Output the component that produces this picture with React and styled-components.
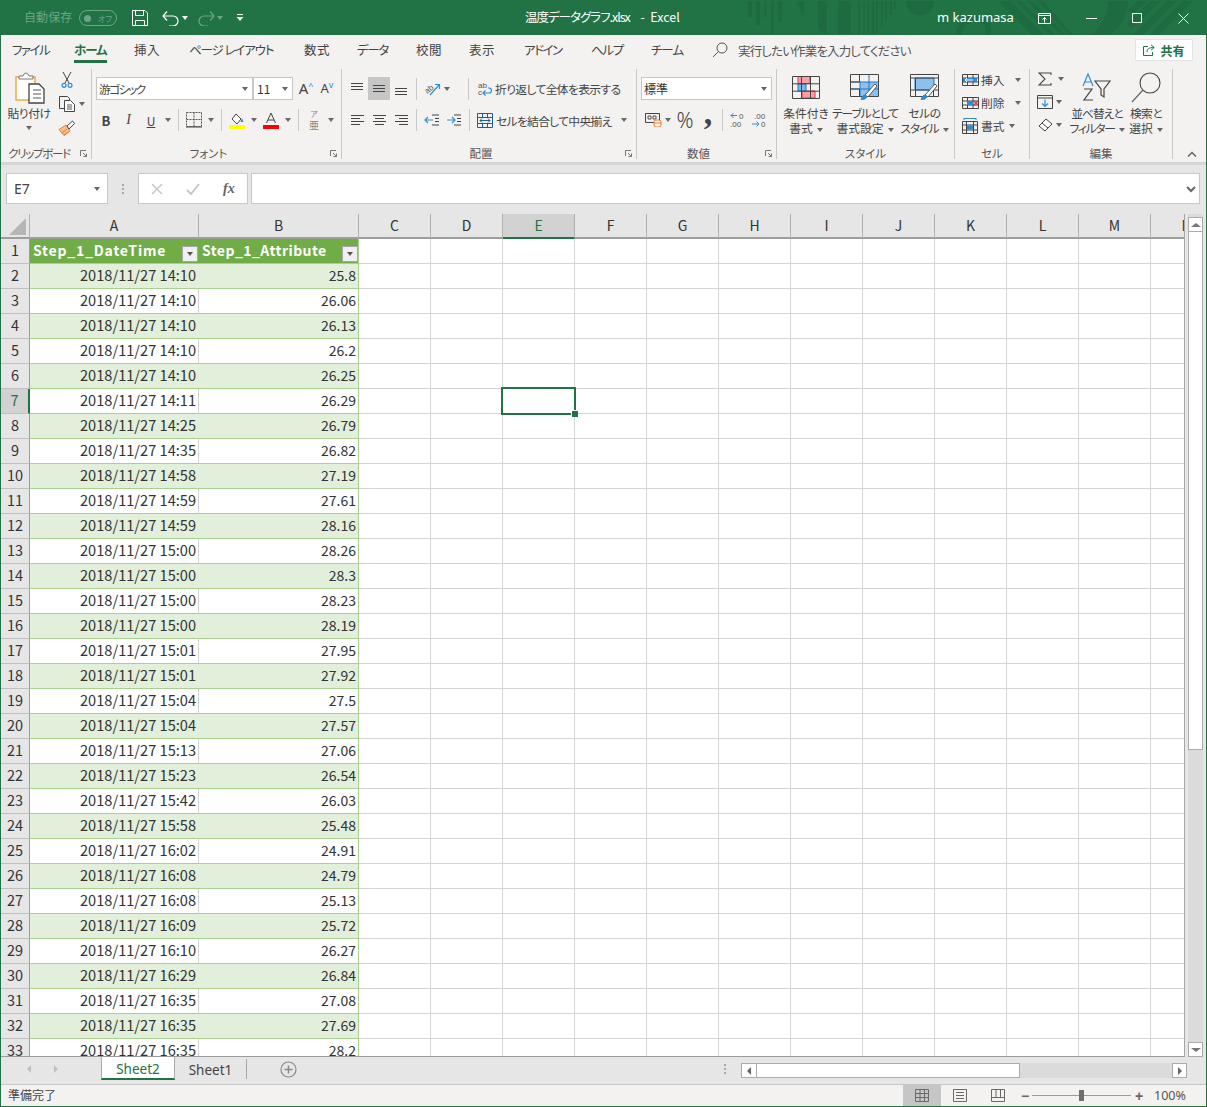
import styled, { createGlobalStyle } from 'styled-components'

const GREEN = '#217346'
const UI = '"Noto Sans CJK JP", "Noto Sans", sans-serif'

const GlobalStyle = createGlobalStyle`
    html, body { margin: 0; padding: 0; background: #fff; }
    * { box-sizing: border-box; }
    body {
        font-family: ${UI};
        font-feature-settings: "palt";
        color: #444;
    }
`

const Window = styled.div`
    width: 1207px;
    height: 1107px;
    border: 1px solid ${GREEN};
    display: flex;
    flex-direction: column;
    overflow: hidden;
    background: #e6e6e6;
`

/* title bar */
const TitleBar = styled.div`
    position: relative;
    height: 34px;
    flex: none;
    background: ${GREEN};
    display: flex;
    align-items: center;
    color: #fff;
    font-size: 12px;
    padding-left: 23px;
`
const Pattern = styled.svg`
    position: absolute;
    left: 0;
    top: 0;
`
const QuickAccess = styled.div`
    position: relative;
    width: 501px;
    display: flex;
    align-items: center;
    flex: none;
`
const AutoSave = styled.span`
    font-size: 12px;
    color: #6fa387;
    letter-spacing: 0.1px;
    width: 55px;
    margin-top: -3px;
`
const Toggle = styled.div`
    width: 38px;
    height: 16px;
    border: 1px solid #6fa387;
    border-radius: 8px;
    display: flex;
    align-items: center;
    padding-left: 4px;
    color: #6fa387;
    font-size: 8px;
    gap: 7px;
    margin-right: 15px;
    &::before {
        content: '';
        width: 7px;
        height: 7px;
        border-radius: 50%;
        background: #6fa387;
    }
`
const QuickIcon = styled.svg`
    flex: none;
    margin-left: ${(p) => p.$ml || 0}px;
`
const WindowTitle = styled.div`
    position: relative;
    width: 412px;
    flex: none;
    font-size: 12.5px;
    white-space: pre;
    margin-top: -3px;
`
const TitleName = styled.span`
    letter-spacing: -1px;
`
const TitleApp = styled.span`
    margin-left: 5px;
`
const UserName = styled.div`
    position: relative;
    width: 101px;
    flex: none;
    font-family: 'Noto Sans', sans-serif;
    font-size: 13px;
    margin-top: -2px;
`
const CaptionIcon = styled.svg`
    position: relative;
    flex: none;
    margin-left: ${(p) => p.$ml || 0}px;
`

/* ribbon tabs */
const TabRow = styled.div`
    height: 33px;
    flex: none;
    display: flex;
    background: #f3f2f1;
    padding-left: 11px;
`
const RibbonTab = styled.div`
    width: ${(p) => p.$w}px;
    flex: none;
    padding-top: 7px;
    display: flex;
    align-items: flex-start;
`
const TabLabel = styled.span`
    display: block;
    height: 21px;
    line-height: 16px;
    font-size: 12.5px;
    white-space: pre;
    letter-spacing: ${(p) => p.$ls}px;
    color: ${(p) => (p.$active ? GREEN : '#444')};
    font-weight: ${(p) => (p.$active ? 700 : 400)};
    border-bottom: ${(p) => (p.$active ? `3px solid ${GREEN}` : 'none')};
`
const TellMe = styled.div`
    display: flex;
    align-items: center;
    font-size: 12.5px;
    color: #555;
    height: 30px;
    letter-spacing: -0.85px;
    & > svg {
        margin-right: 10px;
    }
`
const ShareButton = styled.div`
    margin-left: auto;
    margin-right: 13px;
    margin-top: 4px;
    width: 58px;
    height: 22px;
    background: #fff;
    border: 1px solid #e3e3e3;
    display: flex;
    align-items: center;
    justify-content: center;
    gap: 5px;
    color: ${GREEN};
    font-weight: 700;
    font-size: 12px;
`

/* ribbon body */
const Ribbon = styled.div`
    height: 94px;
    flex: none;
    display: flex;
    background: #f3f2f1;
    padding-top: 1px;
    border-bottom: 0;
    position: relative;
`
const RibbonShadow = styled.div`
    height: 3px;
    flex: none;
    background: #d6d6d6;
`
const Group = styled.div`
    width: ${(p) => p.$w}px;
    height: 90px;
    flex: none;
    border-right: 1px solid #c8c8c8;
    display: flex;
    flex-direction: column;
`
const GroupBody = styled.div`
    height: 76px;
    flex: none;
    display: flex;
    flex-direction: ${(p) => p.$dir || 'row'};
`
const GroupFoot = styled.div`
    position: relative;
    height: 16px;
    line-height: 16px;
    text-align: ${(p) => (p.$left ? 'left' : 'center')};
    padding-left: ${(p) => (p.$left ? 7 : 0)}px;
    padding-right: ${(p) => p.$pr || 0}px;
    letter-spacing: ${(p) => p.$ls || 0}px;
    font-size: 11.5px;
    color: #555;
    white-space: nowrap;
`
const Launcher = styled.svg`
    position: absolute;
    right: 4px;
    top: 5px;
`
const Collapse = styled.svg`
    position: absolute;
    right: 9px;
    bottom: 5px;
`
const ToolRow = styled.div`
    display: flex;
    align-items: center;
    height: ${(p) => p.$h || 24}px;
    margin-top: ${(p) => p.$mt || 0}px;
    padding-left: ${(p) => p.$pl || 0}px;
`
const Tool = styled.div`
    width: ${(p) => p.$w}px;
    height: 23px;
    flex: none;
    display: flex;
    align-items: center;
    justify-content: center;
    font-family: ${(p) => (p.$serif ? '"Liberation Serif", serif' : 'inherit')};
    font-size: ${(p) => p.$fs || 13}px;
    font-weight: ${(p) => (p.$bold ? 700 : 400)};
    font-style: ${(p) => (p.$italic ? 'italic' : 'normal')};
    background: ${(p) => (p.$on ? '#c6c6c6' : 'transparent')};
    color: #444;
`
const GrowFont = styled.span`
    font-family: 'Noto Sans', sans-serif;
    line-height: 1;
    & > sup {
        font-size: 9px;
        color: #2a8dd4;
        vertical-align: 5px;
        line-height: 0;
    }
`
const Ruby = styled.span`
    display: flex;
    flex-direction: column;
    align-items: center;
    gap: 2px;
    color: #888;
    font-size: 10px;
    line-height: 10px;
    & > small {
        font-size: 8px;
        line-height: 8px;
    }
`
const PercentTool = styled(Tool)`
    font-family: 'Noto Sans', sans-serif;
    font-size: 21px;
    font-weight: 300;
`
const CommaTool = styled(Tool)`
    font-family: 'Liberation Serif', serif;
    font-size: 34px;
    font-weight: 700;
    line-height: 23px;
    padding: 0 0 16px 2px;
`
const Caret = styled.span`
    display: inline-block;
    flex: none;
    width: 0;
    height: 0;
    border-left: 3.5px solid transparent;
    border-right: 3.5px solid transparent;
    border-top: 4px solid ${(p) => p.$c || '#666'};
    margin-left: ${(p) => p.$ml || 0}px;
    margin-top: ${(p) => p.$mt || 0}px;
    vertical-align: middle;
`
const Divider = styled.div`
    width: ${(p) => p.$w || 10}px;
    margin-left: ${(p) => p.$ml || 0}px;
    height: 22px;
    flex: none;
    display: flex;
    justify-content: center;
    &::before {
        content: '';
        width: 1px;
        background: #c8c8c8;
    }
`
const ComboBox = styled.div`
    width: ${(p) => p.$w}px;
    height: 23px;
    flex: none;
    background: #fff;
    border: 1px solid #c6c6c6;
    display: flex;
    align-items: center;
    justify-content: space-between;
    padding: 0 4px 0 2px;
    font-size: 12px;
    letter-spacing: ${(p) => p.$ls || 0}px;
    color: #333;
`
const ToolText = styled.span`
    font-size: 11.8px;
    white-space: nowrap;
    color: #444;
    letter-spacing: ${(p) => p.$ls || 0}px;
    margin-left: ${(p) => p.$ml || 0}px;
`
const PasteColumn = styled.div`
    width: 56px;
    flex: none;
    display: flex;
    flex-direction: column;
    align-items: center;
    padding-top: 3px;
    font-size: 11.8px;
    line-height: 15px;
    letter-spacing: -0.5px;
`
const PasteIcon = styled.svg`
    margin-left: 4px;
    margin-bottom: 1px;
`
const ToolStack = styled.div`
    display: flex;
    flex-direction: column;
    margin-top: ${(p) => p.$mt || -1}px;
    width: ${(p) => p.$w || 'auto'};
`
const BigButton = styled.div`
    width: ${(p) => p.$w}px;
    flex: none;
    display: flex;
    flex-direction: column;
    align-items: center;
    font-size: 11.8px;
    line-height: 15px;
    white-space: nowrap;
    color: #444;
`
const BigLine = styled.span`
    letter-spacing: ${(p) => p.$ls || 0}px;
`
const BigIcon = styled.div`
    height: 36px;
    display: flex;
    align-items: center;
    justify-content: center;
`

/* formula bar */
const FormulaBar = styled.div`
    height: 49px;
    flex: none;
    display: flex;
    padding: 8px 6px 10px 5px;
    background: #e6e6e6;
`
const NameBox = styled.div`
    width: 102px;
    height: 31px;
    background: #fff;
    border: 1px solid #c8c8c8;
    display: flex;
    align-items: center;
    justify-content: space-between;
    padding: 0 7px 0 7px;
    font-family: 'Noto Sans', sans-serif;
    font-size: 14px;
    color: #444;
`
const Grip = styled.div`
    width: 30px;
    display: flex;
    flex-direction: column;
    align-items: center;
    justify-content: center;
    gap: 2px;
    & > i {
        width: 2px;
        height: 2px;
        background: #a8a8a8;
    }
`
const FormulaButtons = styled.div`
    width: 110px;
    height: 31px;
    background: #fff;
    border: 1px solid #c8c8c8;
    display: flex;
    align-items: center;
`
const FormulaButton = styled.div`
    width: 36px;
    display: flex;
    justify-content: center;
    font-family: 'Liberation Serif', serif;
    font-style: italic;
    font-weight: 700;
    font-size: 14px;
    color: #666;
`
const FormulaInput = styled.div`
    width: 950px;
    height: 31px;
    margin-left: 3px;
    background: #fff;
    border: 1px solid #c8c8c8;
    display: flex;
    align-items: center;
    justify-content: flex-end;
    padding-right: 3px;
`

/* sheet */
const Sheet = styled.div`
    height: 843px;
    flex: none;
    display: flex;
`
const GridViewport = styled.div`
    width: 1184px;
    height: 843px;
    flex: none;
    overflow: hidden;
    background: #fff;
    border-right: 1px solid #a6a6a6;
    border-bottom: 1px solid #9a9a9a;
    position: relative;
`
const Grid = styled.div`
    display: grid;
    grid-template-columns: 29px 169px 160px repeat(12, 72px);
    grid-auto-rows: 25px;
    width: 1300px;
    font-family: 'Noto Sans CJK JP', sans-serif;
    font-feature-settings: normal;
`
const Corner = styled.div`
    background: #e6e6e6;
    border-right: 1px solid #b0b0b0;
    border-bottom: 2px solid #9e9e9e;
    position: relative;
    &::after {
        content: '';
        position: absolute;
        left: 8px;
        top: 4px;
        width: 17px;
        height: 17px;
        background: #b6b6b6;
        clip-path: polygon(100% 0, 100% 100%, 0 100%);
    }
`
const ColHead = styled.div`
    background: ${(p) => (p.$active ? '#d2d2d2' : '#e6e6e6')};
    border-right: 1px solid #b0b0b0;
    border-bottom: 2px solid ${(p) => (p.$active ? GREEN : '#9e9e9e')};
    display: flex;
    align-items: center;
    justify-content: center;
    padding-bottom: 2px;
    font-size: 14px;
    color: ${(p) => (p.$active ? GREEN : '#333')};
`
const RowHead = styled.div`
    background: ${(p) => (p.$active ? '#d2d2d2' : '#e6e6e6')};
    border-right: ${(p) => (p.$active ? `2px solid ${GREEN}` : '1px solid #9e9e9e')};
    border-bottom: 1px solid #c0c0c0;
    display: flex;
    align-items: center;
    justify-content: center;
    padding-bottom: 3px;
    font-size: 14.5px;
    color: ${(p) => (p.$active ? GREEN : '#333')};
`
const TableHead = styled.div`
    background: #70ad47;
    color: #fff;
    font-weight: 700;
    font-size: 14px;
    letter-spacing: ${(p) => (p.$last ? 0.45 : 0.8)}px;
    border-bottom: 1px solid #a9d08e;
    border-right: ${(p) => (p.$last ? '1px solid #a9d08e' : 'none')};
    display: flex;
    align-items: center;
    justify-content: space-between;
    padding: 0 ${(p) => (p.$last ? 0 : 1)}px 2px 3px;
`
const FilterButton = styled.div`
    width: 16px;
    height: 16px;
    flex: none;
    background: #f0f0f0;
    border: 1px solid #a6a6a6;
    margin-top: 8px;
    display: flex;
    align-items: center;
    justify-content: center;
`
const DataCell = styled.div`
    background: ${(p) => (p.$band ? '#e2efda' : '#fff')};
    border-bottom: 1px solid #a9d08e;
    border-right: ${(p) =>
        p.$last ? '1px solid #a9d08e' : p.$band ? 'none' : '1px solid #d4d4d4'};
    text-align: right;
    padding-right: ${(p) => (p.$last ? 2 : p.$band ? 3 : 2)}px;
    font-size: ${(p) => (p.$last ? 14 : 14.6)}px;
    line-height: 22px;
    color: #333;
`
const EmptyCell = styled.div`
    position: relative;
    border-right: 1px solid #d4d4d4;
    border-bottom: 1px solid #d4d4d4;
`
const Selection = styled.div`
    position: absolute;
    inset: -2px;
    border: 2px solid ${GREEN};
    z-index: 2;
    &::after {
        content: '';
        position: absolute;
        right: -4px;
        bottom: -4px;
        width: 6px;
        height: 6px;
        background: ${GREEN};
        border-left: 1px solid #fff;
        border-top: 1px solid #fff;
    }
`
const VScroll = styled.div`
    width: 15px;
    height: 843px;
    margin-left: 3px;
    padding-top: 3px;
    flex: none;
    display: flex;
    flex-direction: column;
    background: #dbdbdb;
`
const ScrollButton = styled.div`
    width: ${(p) => p.$w || 15}px;
    height: ${(p) => p.$h || 15}px;
    flex: none;
    background: #fff;
    border: 1px solid #ababab;
    display: flex;
    align-items: center;
    justify-content: center;
    margin-left: ${(p) => p.$ml || 0}px;
`
const VThumb = styled.div`
    height: 518px;
    flex: none;
    background: #fff;
    border: 1px solid #ababab;
    border-top: 0;
`
const TrackFill = styled.div`
    flex: 1;
`

/* sheet tabs */
const SheetTabs = styled.div`
    height: 28px;
    flex: none;
    display: flex;
    background: #e6e6e6;
    border-bottom: 1px solid #c6c6c6;
`
const SheetNav = styled.div`
    width: 100px;
    flex: none;
    display: flex;
    align-items: center;
    padding: 0 0 4px 26px;
    gap: 23px;
`
const SheetTab = styled.div`
    width: ${(p) => p.$w}px;
    height: 24px;
    flex: none;
    margin-top: -1px;
    padding-top: 3px;
    display: flex;
    align-items: center;
    justify-content: center;
    font-family: 'Noto Sans', sans-serif;
    font-size: 13.5px;
    color: ${(p) => (p.$active ? GREEN : '#444')};
    background: ${(p) => (p.$active ? '#fff' : 'transparent')};
    border-left: ${(p) => (p.$active ? '1px solid #ababab' : 'none')};
    border-right: ${(p) => (p.$active ? '1px solid #ababab' : 'none')};
    border-bottom: ${(p) => (p.$active ? `2px solid ${GREEN}` : 'none')};
`
const TabDivider = styled.div`
    width: 1px;
    height: 20px;
    margin-top: 2px;
    background: #a6a6a6;
    margin-left: 0;
`
const AddSheet = styled.svg`
    margin: 4px 0 0 33px;
    flex: none;
`
const SplitGrip = styled(Grip)`
    width: 10px;
    margin-left: 423px;
    padding-bottom: 4px;
    gap: 2px;
`
const HScroll = styled.div`
    width: 446px;
    height: 15px;
    margin: 6px 0 0 11px;
    flex: none;
    display: flex;
    background: #dbdbdb;
`
const HThumb = styled.div`
    width: 263px;
    height: 15px;
    flex: none;
    background: #fff;
    border: 1px solid #ababab;
    border-left: 0;
    margin-left: 0;
`

/* status bar */
const StatusBar = styled.div`
    height: 21px;
    flex: none;
    display: flex;
    align-items: center;
    background: #f3f2f1;
    font-size: 12px;
    color: #444;
    padding-left: 7px;
`
const StatusText = styled.span`
    width: 895px;
    flex: none;
    margin-top: -2px;
`
const ViewButton = styled.div`
    width: 38px;
    height: 21px;
    flex: none;
    display: flex;
    align-items: center;
    justify-content: center;
    background: ${(p) => (p.$on ? '#c6c6c6' : 'transparent')};
`
const ZoomSlider = styled.div`
    position: relative;
    width: 99px;
    height: 1px;
    flex: none;
    background: #9a9a9a;
    margin: 0 3px 0 2px;
`
const ZoomThumb = styled.div`
    position: absolute;
    left: 47px;
    top: -5px;
    width: 5px;
    height: 11px;
    background: #6e6e6e;
`
const ZoomMark = styled.span`
    width: 10px;
    text-align: center;
    font-family: 'Liberation Sans', sans-serif;
    font-weight: 700;
    font-size: 14px;
    line-height: 1;
    color: #666;
    margin-left: ${(p) => p.$ml || 0}px;
    flex: none;
`
const ZoomValue = styled.span`
    margin-left: 10px;
    font-family: 'Noto Sans', sans-serif;
    font-size: 12.5px;
    color: #555;
`

const Arrow = styled.span`
    width: 0;
    height: 0;
    flex: none;
    border-top: ${(p) => p.$s || 4}px solid transparent;
    border-bottom: ${(p) => p.$s || 4}px solid transparent;
    border-left: ${(p) => (p.$dir === 'right' ? `${p.$s || 4}px solid ${p.$c || '#666'}` : 'none')};
    border-right: ${(p) => (p.$dir === 'left' ? `${p.$s || 4}px solid ${p.$c || '#666'}` : 'none')};
`
const UpArrow = styled.span`
    width: 0;
    height: 0;
    border-left: 5px solid transparent;
    border-right: 5px solid transparent;
    border-bottom: 4px solid #777;
`
const DownArrow = styled(UpArrow)`
    border-bottom: 0;
    border-top: 4px solid #777;
`

const rows = [
    ['14:10', '25.8'], ['14:10', '26.06'], ['14:10', '26.13'], ['14:10', '26.2'],
    ['14:10', '26.25'], ['14:11', '26.29'], ['14:25', '26.79'], ['14:35', '26.82'],
    ['14:58', '27.19'], ['14:59', '27.61'], ['14:59', '28.16'], ['15:00', '28.26'],
    ['15:00', '28.3'], ['15:00', '28.23'], ['15:00', '28.19'], ['15:01', '27.95'],
    ['15:01', '27.92'], ['15:04', '27.5'], ['15:04', '27.57'], ['15:13', '27.06'],
    ['15:23', '26.54'], ['15:42', '26.03'], ['15:58', '25.48'], ['16:02', '24.91'],
    ['16:08', '24.79'], ['16:08', '25.13'], ['16:09', '25.72'], ['16:10', '26.27'],
    ['16:29', '26.84'], ['16:35', '27.08'], ['16:35', '27.69'], ['16:35', '28.2'],
]
const columns = ['A', 'B', 'C', 'D', 'E', 'F', 'G', 'H', 'I', 'J', 'K', 'L', 'M', 'N']
const emptyColumns = columns.slice(2)

const tabs = [
    ['ファイル', 62, -1.5], ['ホーム', 60, -1, true], ['挿入', 55, 0.5], ['ページ レイアウト', 115, -1.1],
    ['数式', 53, 0.5], ['データ', 59, -1.3], ['校閲', 53, 0.5], ['表示', 55, 0.5], ['アドイン', 67, -1.5],
    ['ヘルプ', 60, -1.3], ['チーム', 61, -1],
]

const Ico = ({ w, h, children }) => (
    <svg width={w} height={h} viewBox={`0 0 ${w} ${h}`} fill="none">
        {children}
    </svg>
)

const LauncherIcon = () => (
    <Launcher width="7" height="7" viewBox="0 0 7 7" fill="none" stroke="#777">
        <path d="M.5 6V.5H6M3 3l3.5 3.5M6.5 3.5v3h-3" />
    </Launcher>
)

const Lines = ({ rows: r }) => (
    <Ico w={16} h={14}>
        <g stroke="#444">
            {r.map(([a, b, y]) => (
                <path key={y} d={`M${a} ${y}.5H${b}`} />
            ))}
        </g>
    </Ico>
)

function TitleDecor() {
    return (
        <Pattern width="1207" height="34" viewBox="0 0 1207 34" fill="#1e6a41">
            <path d="M747 0h4v16h-4zM755 0h4v24h-4zM763 0h3v16h-3zM770 0h3v33h-3zM777 0h4v21h-4z" />
            <path d="M795 0h8v15zM813 0h4v24q0 8 9 9V0h-13zM837 0h13v33h-13z" />
            <path d="M857 0h2v33h-2zM862 0h2v33h-2zM866 0h2v33h-2zM871 0h2v33h-2zM875 0h2v32h-2zM880 0h2v26h-2zM884 0h2v20h-2zM889 0h2v14h-2zM893 0h2v8h-2z" />
            <path d="M905 0h28a14 14 0 0 1-28 0z" />
            <path d="M955 34a20 20 0 0 1 20-20 16 16 0 0 1 15 20h-6a10 10 0 0 0-9-14 14 14 0 0 0-14 14z" />
            <path d="M997 0h12l34 34h-12zM1015 0h5l34 34h-5zM1026 0h5l34 34h-5zM1037 0h5l30 34h-5z" />
            <path d="M1107 0h20q-2 22-18 34h-20q18-12 18-34z" />
            <path d="M1136 0h10l-14 14-5-5zM1150 0h10l-30 28-5-5zM1166 0h10l-34 34h-10zM1182 0h10l-34 34h-10z" />
        </Pattern>
    )
}

function Title() {
    return (
        <TitleBar>
            <TitleDecor />
            <QuickAccess>
                <AutoSave>自動保存</AutoSave>
                <Toggle>オフ</Toggle>
                <QuickIcon width="16" height="16" viewBox="0 0 16 16" fill="none" stroke="#fff">
                    <path d="M.5.5h12.5l2.5 2.5v12.5H.5zM3.5.5v5h8v-5M3.5 15.5v-5h9v5" />
                </QuickIcon>
                <QuickIcon $ml={14} width="17" height="16" viewBox="0 0 17 16" fill="none" stroke="#fff" strokeWidth="1.2">
                    <path d="M1 6h10a5 5 0 0 1 0 10H7M5 1.5L1 6l4 4.5" />
                </QuickIcon>
                <Caret $ml={3} $c="#fff" />
                <QuickIcon $ml={10} width="17" height="16" viewBox="0 0 17 16" fill="none" stroke="#6fa387" strokeWidth="1.2">
                    <path d="M16 6H6a5 5 0 0 0 0 10h4M12 1.5L16 6l-4 4.5" />
                </QuickIcon>
                <Caret $ml={2} $c="#6fa387" />
                <QuickIcon $ml={13} width="8" height="8" viewBox="0 0 8 8" fill="#fff">
                    <path d="M1 0h6v1H1zM.5 3h7L4 7z" />
                </QuickIcon>
            </QuickAccess>
            <WindowTitle>
                <TitleName>温度データグラフ.xlsx</TitleName>
                <TitleApp>  -  Excel</TitleApp>
            </WindowTitle>
            <UserName>m kazumasa</UserName>
            <CaptionIcon width="14" height="11" viewBox="0 0 14 11" fill="none" stroke="#fff">
                <path d="M.5.5h12v10H.5zM.5 2.5h12M6.5 9.5V4.5M4.5 6.5l2-2 2 2" />
            </CaptionIcon>
            <CaptionIcon $ml={34} width="11" height="11" viewBox="0 0 11 11" fill="none" stroke="#fff">
                <path d="M0 5.5h11" />
            </CaptionIcon>
            <CaptionIcon $ml={35} width="10" height="10" viewBox="0 0 10 10" fill="none" stroke="#fff">
                <path d="M.5.5h9v9h-9z" />
            </CaptionIcon>
            <CaptionIcon $ml={36} width="11" height="11" viewBox="0 0 11 11" fill="none" stroke="#fff">
                <path d="M.5.5l10 10M10.5.5l-10 10" />
            </CaptionIcon>
        </TitleBar>
    )
}

function Tabs() {
    return (
        <TabRow>
            {tabs.map(([label, w, ls, active]) => (
                <RibbonTab key={label} $w={w}>
                    <TabLabel $active={active} $ls={ls}>{label}</TabLabel>
                </RibbonTab>
            ))}
            <TellMe>
                <Ico w={16} h={16}>
                    <circle cx="10" cy="6" r="5" stroke="#555" />
                    <path d="M6.5 9.5L1 15" stroke="#555" />
                </Ico>
                実行したい作業を入力してください
            </TellMe>
            <ShareButton>
                <Ico w={12} h={12}>
                    <path d="M5 2.5H.5v9h9V8M4 8c0-3 2-4.5 7-4.5M8 .8l3.2 2.7L8 6.2" stroke={GREEN} />
                </Ico>
                共有
            </ShareButton>
        </TabRow>
    )
}

function ClipboardGroup() {
    return (
        <Group $w={91}>
            <GroupBody>
                <PasteColumn>
                    <PasteIcon width="32" height="32" viewBox="0 0 32 32" fill="none">
                        <path d="M1 5h19v23H1z" fill="#fff" stroke="#f0a94a" strokeWidth="1.5" />
                        <path d="M4 7V4h4q1-3 3-3t3 3h4v3z" fill="#fff" stroke="#777" />
                        <path d="M14 12h10l5 5v14H14z" fill="#fff" stroke="#444" strokeWidth="1.3" />
                        <path d="M18 18h8M18 22h8M18 26h8" stroke="#555" />
                    </PasteIcon>
                    貼り付け
                    <Caret $mt={6} />
                </PasteColumn>
                <ToolStack>
                    <ToolRow>
                        <Tool $w={20}>
                            <Ico w={12} h={16}>
                                <path d="M2 0l6 11M10 0L4 11" stroke="#444" />
                                <circle cx="3" cy="13.3" r="2" stroke="#2a8dd4" strokeWidth="1.2" />
                                <circle cx="9" cy="13.3" r="2" stroke="#2a8dd4" strokeWidth="1.2" />
                            </Ico>
                        </Tool>
                    </ToolRow>
                    <ToolRow>
                        <Tool $w={20}>
                            <Ico w={17} h={16}>
                                <path d="M5 12.5H.5V.5h8l2 2V4" stroke="#444" />
                                <path d="M5.5 4.5h6l4 4v7h-10z" fill="#fff" stroke="#444" />
                                <path d="M8 9h5M8 11h5M8 13h5" stroke="#555" />
                            </Ico>
                        </Tool>
                        <Caret $ml={2} />
                    </ToolRow>
                    <ToolRow>
                        <Tool $w={20}>
                            <Ico w={18} h={16}>
                                <path d="M1 9.500L8 5l4 6-6 4.500z" fill="#f8c08a" stroke="#ed7d31" />
                                <path d="M4 13l5-4M6 15l4-3" stroke="#ed7d31" />
                                <path d="M9 6l2 3 5.500-5.500-2-2.500z" fill="#fff" stroke="#444" />
                            </Ico>
                        </Tool>
                    </ToolRow>
                </ToolStack>
            </GroupBody>
            <GroupFoot $left $ls={-1.3}>
                クリップボード
                <LauncherIcon />
            </GroupFoot>
        </Group>
    )
}

function FontGroup() {
    return (
        <Group $w={250}>
            <GroupBody $dir="column">
                <ToolRow $h={23} $mt={8} $pl={4}>
                    <ComboBox $w={157}>
                        <ToolText $ls={-1.6}>游ゴシック</ToolText>
                        <Caret />
                    </ComboBox>
                    <ComboBox $w={40}>
                        <span style={{ paddingLeft: 1 }}>11</span>
                        <Caret />
                    </ComboBox>
                    <Tool $w={22} $fs={15} style={{ marginLeft: 2 }}>
                        <GrowFont>A<sup>^</sup></GrowFont>
                    </Tool>
                    <Tool $w={20} $fs={13}>
                        <GrowFont>A<sup>v</sup></GrowFont>
                    </Tool>
                </ToolRow>
                <ToolRow $h={24} $mt={8} $pl={3}>
                    <Tool $w={22} $bold $fs={13}>B</Tool>
                    <Tool $w={23} $italic $serif $fs={14}>I</Tool>
                    <Tool $w={22} $fs={12}>
                        <span style={{ textDecoration: 'underline' }}>U</span>
                    </Tool>
                    <Tool $w={11}><Caret /></Tool>
                    <Divider />
                    <Tool $w={22}>
                        <Ico w={16} h={16}>
                            <path d="M.5.5h15v14H.5zM8 .5v14M.5 7.5h15" stroke="#555" strokeDasharray="2 1" />
                            <path d="M0 15h16" stroke="#444" />
                        </Ico>
                    </Tool>
                    <Tool $w={11}><Caret /></Tool>
                    <Divider />
                    <Tool $w={22}>
                        <Ico w={16} h={17}>
                            <path d="M3 7l4-5 5 5-4 5z" fill="#fff" stroke="#444" />
                            <path d="M13 6l1.5 4h-3z" fill="#2a8dd4" />
                            <path d="M0 13h16v4H0z" fill="#ffff00" />
                        </Ico>
                    </Tool>
                    <Tool $w={11}><Caret /></Tool>
                    <Tool $w={24}>
                        <Ico w={16} h={17}>
                            <path d="M3.5 11L8 1l4.500 10M5 8h6" stroke="#444" />
                            <path d="M0 13h16v4H0z" fill="#ff0000" />
                        </Ico>
                    </Tool>
                    <Tool $w={10}><Caret /></Tool>
                    <Divider />
                    <Tool $w={22}>
                        <Ruby>
                            <small>ア</small>
                            亜
                        </Ruby>
                    </Tool>
                    <Tool $w={11}><Caret /></Tool>
                </ToolRow>
            </GroupBody>
            <GroupFoot $pr={16}>
                フォント
                <LauncherIcon />
            </GroupFoot>
        </Group>
    )
}

function AlignGroup() {
    return (
        <Group $w={295}>
            <GroupBody $dir="column">
                <ToolRow $h={23} $mt={8} $pl={4}>
                    <Tool $w={22}>
                        <Lines rows={[[2, 14, 1], [2, 14, 4], [2, 14, 7]]} />
                    </Tool>
                    <Tool $w={22} $on>
                        <Lines rows={[[2, 14, 3], [2, 14, 6], [2, 14, 9]]} />
                    </Tool>
                    <Tool $w={22}>
                        <Lines rows={[[2, 14, 6], [2, 14, 9], [2, 14, 12]]} />
                    </Tool>
                    <Divider $w={8} />
                    <Tool $w={24}>
                        <Ico w={20} h={18}>
                            <text x="3" y="12" fontSize="8" fill="#555" fontFamily="Liberation Sans" transform="rotate(-40 7 10)">ab</text>
                            <path d="M8 15L17 5M13 4.500h4.500V9" stroke="#2a8dd4" strokeWidth="1.2" />
                        </Ico>
                    </Tool>
                    <Caret />
                    <Divider $ml={13} />
                    <Tool $w={22}>
                        <Ico w={18} h={16}>
                            <text x="3" y="7" fontSize="8" fill="#555" fontFamily="Liberation Sans">ab</text>
                            <text x="3" y="14" fontSize="8" fill="#555" fontFamily="Liberation Sans">c</text>
                            <path d="M8 12h6a2.500 2.500 0 0 0 0-5h-1M10.500 9.500L8 12l2.500 2.500" stroke="#2a8dd4" strokeWidth="1.2" />
                        </Ico>
                    </Tool>
                    <ToolText $ls={-0.65}>折り返して全体を表示する</ToolText>
                </ToolRow>
                <ToolRow $h={24} $mt={8} $pl={4}>
                    <Tool $w={22}>
                        <Lines rows={[[2, 15, 2], [2, 11, 5], [2, 15, 8], [2, 11, 11]]} />
                    </Tool>
                    <Tool $w={22}>
                        <Lines rows={[[2, 15, 2], [4, 13, 5], [2, 15, 8], [4, 13, 11]]} />
                    </Tool>
                    <Tool $w={22}>
                        <Lines rows={[[2, 15, 2], [6, 15, 5], [2, 15, 8], [6, 15, 11]]} />
                    </Tool>
                    <Divider $w={8} />
                    <Tool $w={23}>
                        <Ico w={16} h={12}>
                            <path d="M8 1h7M11 4.500h4M11 7.500h4M8 11h7" stroke="#444" />
                            <path d="M9 6H1M4 3L1 6l3 3" stroke="#2a8dd4" strokeWidth="1.2" />
                        </Ico>
                    </Tool>
                    <Tool $w={21}>
                        <Ico w={16} h={12}>
                            <path d="M8 1h7M11 4.500h4M11 7.500h4M8 11h7" stroke="#444" />
                            <path d="M1 6h8M6 3l3 3-3 3" stroke="#2a8dd4" strokeWidth="1.2" />
                        </Ico>
                    </Tool>
                    <Divider />
                    <Tool $w={22}>
                        <Ico w={16} h={15}>
                            <path d="M.5.5h15v14H.5zM.5 4.500h15M.5 10.500h15M5.500.5v4M10.500.5v4M5.500 10.500v4M10.500 10.500v4" stroke="#1f5c99" />
                            <path d="M3 7.500h10M5 5.500l-2 2 2 2M11 5.500l2 2-2 2" stroke="#1f5c99" />
                        </Ico>
                    </Tool>
                    <ToolText $ls={-0.7}>セルを結合して中央揃え</ToolText>
                    <Caret $ml={9} />
                </ToolRow>
            </GroupBody>
            <GroupFoot $pr={16}>
                配置
                <LauncherIcon />
            </GroupFoot>
        </Group>
    )
}

function NumberGroup() {
    return (
        <Group $w={140}>
            <GroupBody $dir="column">
                <ToolRow $h={23} $mt={8} $pl={4}>
                    <ComboBox $w={131}>
                        標準
                        <Caret />
                    </ComboBox>
                </ToolRow>
                <ToolRow $h={24} $mt={8} $pl={4}>
                    <Tool $w={24}>
                        <Ico w={17} h={14}>
                            <path d="M.5.5h14v9H.5z" stroke="#444" />
                            <path d="M3 3h3v3H3zM8 3h3v3H8z" stroke="#555" />
                            <rect x="9" y="7" width="7" height="7" rx="2" fill="#f3f2f1" stroke="#ed7d31" />
                            <path d="M9 10h7" stroke="#ed7d31" />
                        </Ico>
                    </Tool>
                    <Caret />
                    <PercentTool $w={28}>%</PercentTool>
                    <CommaTool $w={16}>,</CommaTool>
                    <Divider $w={14} />
                    <Tool $w={18}>
                        <Ico w={16} h={16}>
                            <path d="M7 3.500H1M3.500 1L1 3.500 3.500 6" stroke="#2a8dd4" />
                            <text x="9" y="7" fontSize="8" fill="#555" fontFamily="Liberation Sans">0</text>
                            <text x="0" y="15" fontSize="8" fill="#555" fontFamily="Liberation Sans">.00</text>
                        </Ico>
                    </Tool>
                    <Tool $w={24}>
                        <Ico w={16} h={16}>
                            <text x="3" y="7" fontSize="8" fill="#555" fontFamily="Liberation Sans">.00</text>
                            <path d="M1 12h7M5.500 9.500L8 12l-2.500 2.500" stroke="#2a8dd4" />
                            <text x="10" y="15" fontSize="8" fill="#555" fontFamily="Liberation Sans">0</text>
                        </Ico>
                    </Tool>
                </ToolRow>
            </GroupBody>
            <GroupFoot $pr={16}>
                数値
                <LauncherIcon />
            </GroupFoot>
        </Group>
    )
}

const Brush = () => (
    <>
        <path d="M15 21l10-11 2 2-9 11z" fill="#fff" stroke="#555" />
        <path d="M11 25.500q4 .5 6-2.500-1-2-3-2-2 1-3 4.500z" fill="#2a8dd4" stroke="#2a8dd4" />
    </>
)

function StyleGroup() {
    return (
        <Group $w={178}>
            <GroupBody>
                <BigButton $w={58}>
                    <BigIcon>
                        <Ico w={28} h={23}>
                            <path d="M6 .5h12v7H6zM10 15h13v7H10z" fill="#ff9ea6" stroke="#e0363f" />
                            <path d="M6 8h8v7H6z" fill="#7db9e8" stroke="#1f77c0" />
                            <path d="M.5.5h27v22H.5zM.5 7.800h27M.5 15.200h27M9.500.5v22M18.500.5v22" stroke="#444" />
                        </Ico>
                    </BigIcon>
                    <BigLine $ls={-0.1}>条件付き</BigLine>
                    <BigLine>書式<Caret $ml={4} /></BigLine>
                </BigButton>
                <BigButton $w={60}>
                    <BigIcon>
                        <Ico w={30} h={26}>
                            <path d="M10 8h18v14H10z" fill="#8cc0ee" />
                            <path d="M19 .5v22M10 8v14M.5 8h28M.5 15h28" stroke="#1f77c0" />
                            <path d="M.5.5h28v22H.5zM.5 8h9M.5 15h9M9.500.5V8M9.500 15v8" stroke="#444" />
                            <Brush />
                        </Ico>
                    </BigIcon>
                    <BigLine $ls={-1.1}>テーブルとして</BigLine>
                    <BigLine>書式設定<Caret $ml={4} /></BigLine>
                </BigButton>
                <BigButton $w={59}>
                    <BigIcon>
                        <Ico w={30} h={26}>
                            <path d="M5 4h19v12H5z" fill="#8cc0ee" stroke="#1f77c0" />
                            <path d="M.5.5h28v22H.5zM.5 4h28M.5 16h28M5.500 4v19M23.500 16v7" stroke="#444" />
                            <Brush />
                        </Ico>
                    </BigIcon>
                    <BigLine $ls={-0.4}>セルの</BigLine>
                    <BigLine $ls={-1}>スタイル<Caret $ml={4} /></BigLine>
                </BigButton>
            </GroupBody>
            <GroupFoot>スタイル</GroupFoot>
        </Group>
    )
}

function CellsGroup() {
    return (
        <Group $w={75}>
            <GroupBody $dir="column">
                <ToolStack>
                    <ToolRow $h={23} $pl={7}>
                        <Ico w={17} h={14}>
                            <path d="M.5 1.500h16v11H.5zM.5 5h16M.5 9h16M5.500 1.500v11M11 1.500v11" stroke="#444" />
                            <path d="M1 5h14v4H1z" fill="#2a8dd4" />
                            <path d="M11 7H3M5 5L3 7l2 2" stroke="#fff" />
                        </Ico>
                        <ToolText $ml={2}>挿入</ToolText>
                        <Caret $ml={10} />
                    </ToolRow>
                    <ToolRow $h={23} $pl={7}>
                        <Ico w={17} h={14}>
                            <path d="M.5 1.500h16v11H.5zM.5 5h16M.5 9h16M5.500 1.500v11M11 1.500v11" stroke="#444" />
                            <path d="M5 5h6v4H5z" fill="#2a8dd4" />
                            <path d="M12 5l4 4M16 5l-4 4" stroke="#e0363f" strokeWidth="1.3" />
                        </Ico>
                        <ToolText $ml={2}>削除</ToolText>
                        <Caret $ml={10} />
                    </ToolRow>
                    <ToolRow $h={23} $pl={7}>
                        <Ico w={17} h={16}>
                            <path d="M2 .5h12M2 0v2M14 0v2" stroke="#2a8dd4" />
                            <path d="M.5 3.500h15v12H.5zM.5 7h15M.5 12h15M4.500 3.500v12M11.500 3.500v12" stroke="#444" />
                            <path d="M5 7.500h6v4H5z" fill="#2a8dd4" />
                        </Ico>
                        <ToolText $ml={2}>書式</ToolText>
                        <Caret $ml={4} />
                    </ToolRow>
                </ToolStack>
            </GroupBody>
            <GroupFoot>セル</GroupFoot>
        </Group>
    )
}

function EditGroup() {
    return (
        <Group $w={143}>
            <GroupBody>
                <ToolStack $w="40px" $mt={-2}>
                    <ToolRow $h={23} $pl={5}>
                        <Tool $w={20}>
                            <Ico w={14} h={14}>
                                <path d="M13 3V1H1l6 6-6 6h12v-2" stroke="#444" strokeWidth="1.1" />
                            </Ico>
                        </Tool>
                        <Caret $ml={3} />
                    </ToolRow>
                    <ToolRow $h={23} $pl={5}>
                        <Tool $w={20}>
                            <Ico w={16} h={14}>
                                <path d="M.5.5h15v13H.5zM.5 3h15" stroke="#444" />
                                <path d="M8 4.500v7M5 8.500l3 3 3-3" stroke="#2a8dd4" strokeWidth="1.2" />
                            </Ico>
                        </Tool>
                        <Caret $ml={1} />
                    </ToolRow>
                    <ToolRow $h={23} $pl={5}>
                        <Tool $w={20}>
                            <Ico w={15} h={14}>
                                <path d="M1 8l7-7 6 5-7 7z" fill="#fff" stroke="#444" />
                                <path d="M4 5l6 5" stroke="#444" />
                            </Ico>
                        </Tool>
                        <Caret $ml={1} />
                    </ToolRow>
                </ToolStack>
                <BigButton $w={54}>
                    <BigIcon>
                        <Ico w={30} h={29}>
                            <path d="M1 13L6 1l5 12M2.500 9h7" stroke="#2a8dd4" strokeWidth="1.2" />
                            <path d="M2 16h8L2 27h9" stroke="#444" strokeWidth="1.2" />
                            <path d="M13 8h15l-6 8v8l-3-2v-6z" stroke="#444" strokeWidth="1.2" />
                        </Ico>
                    </BigIcon>
                    <BigLine $ls={-1}>並べ替えと</BigLine>
                    <BigLine $ls={-1.3}>フィルター<Caret $ml={4} /></BigLine>
                </BigButton>
                <BigButton $w={44}>
                    <BigIcon>
                        <Ico w={30} h={31}>
                            <circle cx="19" cy="11" r="10" stroke="#444" strokeWidth="1.1" />
                            <path d="M12 18L1 30" stroke="#666" strokeWidth="1.2" />
                        </Ico>
                    </BigIcon>
                    <BigLine $ls={-0.6}>検索と</BigLine>
                    <BigLine>選択<Caret $ml={4} /></BigLine>
                </BigButton>
            </GroupBody>
            <GroupFoot>編集</GroupFoot>
        </Group>
    )
}

function RibbonBody() {
    return (
        <Ribbon>
            <ClipboardGroup />
            <FontGroup />
            <AlignGroup />
            <NumberGroup />
            <StyleGroup />
            <CellsGroup />
            <EditGroup />
            <Collapse width="10" height="6" viewBox="0 0 10 6" fill="none" stroke="#666" strokeWidth="1.5">
                <path d="M1 5.500l4-4 4 4" />
            </Collapse>
        </Ribbon>
    )
}

function Formula() {
    return (
        <FormulaBar>
            <NameBox>
                E7
                <Caret />
            </NameBox>
            <Grip>
                <i />
                <i />
                <i />
            </Grip>
            <FormulaButtons>
                <FormulaButton>
                    <Ico w={12} h={12}>
                        <path d="M1 1l10 10M11 1L1 11" stroke="#c8c8c8" strokeWidth="1.500" />
                    </Ico>
                </FormulaButton>
                <FormulaButton>
                    <Ico w={14} h={12}>
                        <path d="M1 7l4 4 8-10" stroke="#c8c8c8" strokeWidth="2" />
                    </Ico>
                </FormulaButton>
                <FormulaButton>fx</FormulaButton>
            </FormulaButtons>
            <FormulaInput>
                <Ico w={10} h={8}>
                    <path d="M1 2l4 4 4-4" stroke="#666" strokeWidth="2" />
                </Ico>
            </FormulaInput>
        </FormulaBar>
    )
}

const FilterIcon = () => (
    <FilterButton>
        <Caret $c="#555" />
    </FilterButton>
)

function SheetGrid() {
    return (
        <GridViewport>
            <Grid>
                <Corner />
                {columns.map((c) => (
                    <ColHead key={c} $active={c === 'E'}>{c}</ColHead>
                ))}
                <RowHead>1</RowHead>
                <TableHead>Step_1_DateTime<FilterIcon /></TableHead>
                <TableHead $last>Step_1_Attribute<FilterIcon /></TableHead>
                {emptyColumns.map((c) => (
                    <EmptyCell key={c} />
                ))}
                {rows.map(([time, value], i) => {
                    const num = i + 2
                    const band = num % 2 === 0
                    return [
                        <RowHead key={`h${num}`} $active={num === 7}>{num}</RowHead>,
                        <DataCell key={`a${num}`} $band={band}>2018/11/27 {time}</DataCell>,
                        <DataCell key={`b${num}`} $band={band} $last>{value}</DataCell>,
                        ...emptyColumns.map((c) => (
                            <EmptyCell key={c + num}>
                                {c === 'E' && num === 7 && <Selection />}
                            </EmptyCell>
                        )),
                    ]
                })}
            </Grid>
        </GridViewport>
    )
}

function Footer() {
    return (
        <>
            <SheetTabs>
                <SheetNav>
                    <Arrow $dir="left" $c="#c0c0c0" />
                    <Arrow $dir="right" $c="#c0c0c0" />
                </SheetNav>
                <SheetTab $w={74} $active>Sheet2</SheetTab>
                <SheetTab $w={71}>Sheet1</SheetTab>
                <TabDivider />
                <AddSheet width="17" height="17" viewBox="0 0 17 17" fill="none" stroke="#8a8a8a">
                    <circle cx="8.500" cy="8.500" r="7.500" strokeWidth="1.200" />
                    <path d="M8.500 4.500v8M4.500 8.500h8" strokeWidth="1.500" />
                </AddSheet>
                <SplitGrip>
                    <i />
                    <i />
                    <i />
                </SplitGrip>
                <HScroll>
                    <ScrollButton $w={16}><Arrow $dir="left" /></ScrollButton>
                    <HThumb />
                    <TrackFill />
                    <ScrollButton $w={15} $ml={2}><Arrow $dir="right" /></ScrollButton>
                </HScroll>
            </SheetTabs>
            <StatusBar>
                <StatusText>準備完了</StatusText>
                <ViewButton $on>
                    <Ico w={14} h={13}>
                        <path d="M.5.5h13v12H.5zM.5 4.500h13M.5 8.500h13M5 .5v12M9.500.5v12" stroke="#6a6a6a" />
                    </Ico>
                </ViewButton>
                <ViewButton>
                    <Ico w={14} h={13}>
                        <path d="M.5.5h13v12H.5zM3 3.500h8M3 6.500h8M3 9.500h8" stroke="#6a6a6a" />
                    </Ico>
                </ViewButton>
                <ViewButton>
                    <Ico w={14} h={13}>
                        <path d="M.5.5h13v12H.5zM.5 8.500h13M5 .5v8M9.500.5v8" stroke="#6a6a6a" />
                    </Ico>
                </ViewButton>
                <ZoomMark $ml={3}>−</ZoomMark>
                <ZoomSlider>
                    <ZoomThumb />
                </ZoomSlider>
                <ZoomMark>+</ZoomMark>
                <ZoomValue>100%</ZoomValue>
            </StatusBar>
        </>
    )
}

export default function App() {
    return (
        <Window>
            <GlobalStyle />
            <Title />
            <Tabs />
            <RibbonBody />
            <RibbonShadow />
            <Formula />
            <Sheet>
                <SheetGrid />
                <VScroll>
                    <ScrollButton><UpArrow /></ScrollButton>
                    <VThumb />
                    <TrackFill />
                    <ScrollButton><DownArrow /></ScrollButton>
                </VScroll>
            </Sheet>
            <Footer />
        </Window>
    )
}
